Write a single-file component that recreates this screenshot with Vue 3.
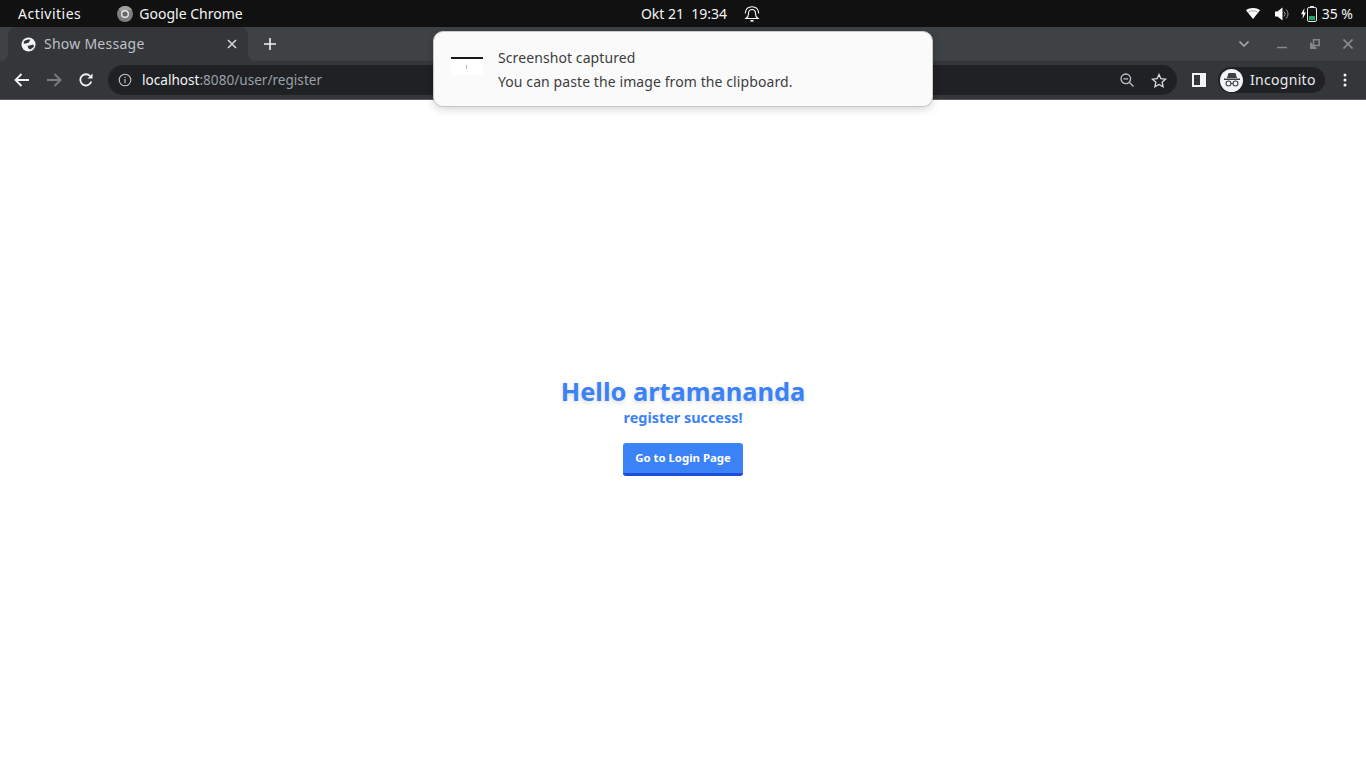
<script setup>
const pageTitle = 'Show Message';
const username = 'artamananda';
</script>

<template>
  <div class="screen">
    <div class="topbar">
      <div class="top-left">
        <span class="activities">Activities</span>
        <span class="app">
          <svg class="app-icon" width="16" height="16" viewBox="0 0 16 16">
            <circle cx="8" cy="8" r="8" fill="#7d7d7d" />
            <path d="M8 0a8 8 0 0 1 7 4H8a4 4 0 0 0-3.600 2.300L2 2.700A8 8 0 0 1 8 0z" fill="#a0a0a0" />
            <circle cx="8" cy="8" r="4" fill="#e8e8e8" />
            <circle cx="8" cy="8" r="2.600" fill="#666" />
          </svg>
          Google Chrome
        </span>
      </div>
      <div class="top-center">
        <span class="clock">Okt 21&nbsp;&nbsp;19:34</span>
        <svg width="16" height="16" viewBox="0 0 16 16" fill="none" stroke="#fff" stroke-width="1.100">
          <path d="M2 12.500c1.500-1 2.500-2.500 2.500-5 0-2.500 1.300-4 3.500-4s3.500 1.500 3.500 4c0 2.500 1 4 2.500 5z" />
          <path d="M1.200 7.500C1.500 3.500 4 .7 8 .7s6.500 2.800 6.800 6.800" />
          <path d="M6.500 14.800h3" stroke-width="1.600" />
        </svg>
      </div>
      <div class="top-right">
        <svg width="14" height="11" viewBox="0 0 14 11">
          <path d="M0 2.200C1.800.8 4.300 0 7 0s5.200.8 7 2.200L7 11z" fill="#fff" />
          <path d="M2.300 4.200C3.600 3.300 5.200 2.800 7 2.800s3.400.5 4.700 1.400" fill="none" stroke="#777" stroke-width=".7" />
        </svg>
        <svg class="vol" width="14" height="14" viewBox="0 0 14 14" fill="none" stroke="#999">
          <path d="M0 4.500h2.500L7.500.5v13l-5-4H0z" fill="#fff" stroke="none" />
          <path d="M9 4.500a3.500 3.500 0 0 1 0 5M11 2.500a6 6 0 0 1 0 9" stroke-width="1" />
        </svg>
        <span class="battery">
          <svg width="5" height="11" viewBox="0 0 5 11"><path d="M3.500 0 0 6.200h2L1.500 11 5 4.500H3z" fill="#fff" /></svg>
          <svg width="10" height="16" viewBox="0 0 10 16">
            <rect x=".5" y="1.500" width="9" height="14" rx="1.500" fill="none" stroke="#e8e8e8" />
            <rect x="3" y="0" width="4" height="1.500" fill="#e8e8e8" />
            <rect x="2" y="10" width="6" height="4" fill="#26a269" />
          </svg>
        </span>
        <span class="percent">35 %</span>
      </div>
    </div>

    <div class="tabstrip">
      <div class="tab">
        <svg width="15" height="15" viewBox="0 0 16 16">
          <circle cx="8" cy="8" r="7.500" fill="#f1f3f4" />
          <path d="M3 4.800C5 3 8 2 10 3L8 6C6.300 6 5 7.500 3 7zM7 9.500 13 8l1 2-4 3.200-2-1z" fill="#35363a" />
        </svg>
        <span class="tab-title">{{ pageTitle }}</span>
        <svg width="10" height="10" viewBox="0 0 10 10" stroke="#dadce0" stroke-width="1.500"><path d="M1 1l8 8M9 1l-8 8" /></svg>
      </div>
      <svg class="new-tab" width="12" height="12" viewBox="0 0 12 12" stroke="#f1f3f4" stroke-width="1.600"><path d="M6 0v12M0 6h12" /></svg>
      <div class="win-controls">
        <svg class="tab-search" width="10" height="6" viewBox="0 0 10 6" fill="none" stroke="#a4a7aa" stroke-width="1.600"><path d="M.5.500 5 5 9.500.500" /></svg>
        <svg width="10" height="10" viewBox="0 0 10 10"><path d="M0 8.500h10" stroke="#85888b" stroke-width="1.500" /></svg>
        <svg width="10" height="10" viewBox="0 0 10 10" fill="none" stroke="#85888b" stroke-width="1.500"><path d="M3.500.8h5.700v5.700H3.500z" /><path d="M.8 3.500v5.700h5.700" fill="#85888b" /></svg>
        <svg width="10" height="10" viewBox="0 0 10 10" stroke="#85888b" stroke-width="1.800"><path d="M.5.500l9 9M9.500.500l-9 9" /></svg>
      </div>
    </div>

    <div class="toolbar">
      <svg class="nav" width="16" height="14" viewBox="0 0 16 14" fill="none" stroke="#f1f3f4" stroke-width="1.800"><path d="M15 7H2M7.500 1 1.500 7l6 6" /></svg>
      <svg class="nav" width="16" height="14" viewBox="0 0 16 14" fill="none" stroke="#7b7d80" stroke-width="1.800"><path d="M1 7h13M8.500 1l6 6-6 6" /></svg>
      <svg class="nav" width="14" height="14" viewBox="0 0 14 14" fill="none" stroke="#f1f3f4" stroke-width="1.800"><path d="M12.300 8.500A5.600 5.600 0 1 1 11 3" /><path d="M13.500 .5v5h-5z" fill="#f1f3f4" stroke="none" /></svg>
      <div class="omnibox">
        <svg width="14" height="14" viewBox="0 0 14 14" fill="none" stroke="#c4c7c9" stroke-width="1.100"><circle cx="7" cy="7" r="5.800" /><path d="M7 6v4.200M7 3.700v1.200" /></svg>
        <span class="url"><span class="host">localhost</span>:8080/user/register</span>
        <svg class="zoom-out" width="14" height="14" viewBox="0 0 14 14" fill="none" stroke="#bdc1c6" stroke-width="1.300"><circle cx="5.800" cy="5.800" r="4.800" /><path d="M9.300 9.300 13.500 13.500M3.500 5.800h4.600" /></svg>
        <svg width="16" height="15" viewBox="0 0 16 15" fill="none" stroke="#dadce0" stroke-width="1.300"><path d="m8 1.500 1.900 4.200 4.600.5-3.400 3 1 4.500L8 11.400l-4.100 2.300 1-4.500-3.400-3 4.600-.5z" /></svg>
      </div>
      <div class="side-panel"></div>
      <div class="profile">
        <span class="avatar">
          <svg width="16" height="14" viewBox="0 0 16 14">
            <path d="M4.500 0h7L13 5H3zM0 5.500h16V7H0z" fill="#3c4043" />
            <g fill="none" stroke="#3c4043" stroke-width="1.100"><circle cx="4.500" cy="10.500" r="2.500" /><circle cx="11.500" cy="10.500" r="2.500" /><path d="M7 10.500h2" /></g>
          </svg>
        </span>
        <span class="profile-label">Incognito</span>
      </div>
      <svg class="menu" width="4" height="14" viewBox="0 0 4 14" fill="#f1f3f4"><circle cx="2" cy="2" r="1.500" /><circle cx="2" cy="7" r="1.500" /><circle cx="2" cy="12" r="1.500" /></svg>
    </div>

    <main class="page">
      <h1 class="hello">Hello {{ username }}</h1>
      <p class="status">register success!</p>
      <button class="login-btn">Go to Login Page</button>
    </main>

    <div class="notification">
      <div class="thumb">
        <span class="thumb-bar"></span>
        <span class="thumb-dot"></span>
      </div>
      <div class="notif-text">
        <div>Screenshot captured</div>
        <div>You can paste the image from the clipboard.</div>
      </div>
    </div>
  </div>
</template>

<style>
html, body {
  margin: 0;
  background: #fff;
}
</style>

<style scoped>
.screen {
  position: relative;
  display: flex;
  flex-direction: column;
  width: 1366px;
  height: 768px;
  overflow: hidden;
  font-family: "Noto Sans", "Open Sans", sans-serif;
}

.topbar {
  display: grid;
  grid-template-columns: 1fr auto 1fr;
  align-items: center;
  height: 27px;
  background: #111;
  color: #f4f4f4;
  font-size: 14px;
}
.top-left {
  display: flex;
  align-items: center;
  gap: 36px;
  padding-left: 18px;
}
.activities {
  letter-spacing: 0.5px;
}
.app {
  display: flex;
  align-items: center;
  gap: 6px;
}
.top-center {
  display: flex;
  align-items: center;
  gap: 17px;
  padding-left: 35px;
}
.top-right {
  display: flex;
  align-items: center;
  justify-content: flex-end;
  padding-right: 13px;
}
.vol {
  margin-left: 15px;
}
.battery {
  display: flex;
  align-items: center;
  gap: 1px;
  margin-left: 12px;
}
.percent {
  margin-left: 5px;
}

.tabstrip {
  display: flex;
  align-items: flex-end;
  height: 34px;
  background: #3e4245;
}
.tab {
  position: relative;
  display: flex;
  align-items: center;
  gap: 8px;
  box-sizing: border-box;
  width: 240px;
  height: 34px;
  margin-left: 8px;
  padding: 0 11px 0 13px;
  background: #35363a;
  border-radius: 8px 8px 0 0;
  color: #bdc1c6;
  font-size: 14px;
}
.tab::before,
.tab::after {
  content: "";
  position: absolute;
  bottom: 0;
  width: 8px;
  height: 8px;
}
.tab::before {
  left: -8px;
  background: radial-gradient(circle at 0 0, transparent 8px, #35363a 8.500px);
}
.tab::after {
  right: -8px;
  background: radial-gradient(circle at 100% 0, transparent 8px, #35363a 8.500px);
}
.tab-title {
  flex: 1;
  margin-bottom: 2px;
  letter-spacing: 0.25px;
}
.new-tab {
  margin: 0 0 11px 16px;
}
.win-controls {
  display: flex;
  align-items: center;
  gap: 23px;
  margin: 0 13px 12px auto;
}
.tab-search {
  margin-right: 5px;
}

.toolbar {
  display: flex;
  align-items: center;
  box-sizing: border-box;
  height: 39px;
  padding: 0 0 0 14px;
  background: #35363a;
  border-bottom: 1px solid #5b5d60;
}
.nav {
  margin-right: 16px;
}
.nav:nth-child(2) {
  margin-right: 17px;
}
.nav:nth-child(3) {
  margin-right: 15px;
}
.omnibox {
  display: flex;
  align-items: center;
  box-sizing: border-box;
  width: 1069px;
  height: 30px;
  padding: 0 10px 0 10px;
  background: #202124;
  border-radius: 15px;
}
.url {
  flex: 1;
  margin-left: 10px;
  margin-bottom: 2px;
  color: #9aa0a6;
  font-size: 13.600px;
}
.host {
  color: #f1f3f4;
}
.zoom-out {
  margin-right: 17px;
}
.side-panel {
  box-sizing: border-box;
  width: 14px;
  height: 14px;
  margin-left: 15px;
  background: #35363a;
  border: 2px solid #f1f3f4;
  border-right-width: 6px;
}
.profile {
  display: flex;
  align-items: center;
  gap: 7px;
  box-sizing: border-box;
  width: 107px;
  height: 26px;
  margin-left: 12px;
  padding-left: 2px;
  background: #202124;
  border-radius: 13px;
}
.avatar {
  display: flex;
  align-items: center;
  justify-content: center;
  width: 23px;
  height: 23px;
  background: #f1f3f4;
  border-radius: 50%;
}
.profile-label {
  margin-bottom: 2px;
  color: #e8eaed;
  font-size: 14px;
  letter-spacing: 0.3px;
}
.menu {
  margin-left: 18px;
}

.page {
  flex: 1;
  display: flex;
  flex-direction: column;
  align-items: center;
  padding-top: 275px;
  background: #fff;
  color: #3b82f6;
}
.hello {
  margin: 0;
  font-size: 25.400px;
  line-height: 32px;
  font-weight: 700;
  text-shadow: 0 2px 4px rgba(0, 0, 0, 0.15);
}
.status {
  margin: 1px 0 0;
  font-size: 14.400px;
  line-height: 20px;
  font-weight: 700;
}
.login-btn {
  box-sizing: border-box;
  width: 120px;
  height: 33px;
  margin-top: 15px;
  padding: 0 0 2px;
  background: #3b82f6;
  border: none;
  border-bottom: 3px solid #1d4ed8;
  border-radius: 3px;
  color: #fff;
  font-family: inherit;
  font-size: 11.400px;
  font-weight: 700;
}

.notification {
  position: absolute;
  top: 31px;
  left: 433px;
  display: flex;
  align-items: center;
  box-sizing: border-box;
  width: 500px;
  height: 76px;
  padding: 0 17px;
  background: #fafafa;
  border: 1px solid #c8c8c8;
  border-radius: 10px;
  box-shadow: 0 2px 8px rgba(0, 0, 0, 0.18);
  color: #3d3d3d;
  font-size: 14px;
  letter-spacing: 0.09px;
}
.thumb {
  position: relative;
  width: 32px;
  height: 18px;
  margin-bottom: 6px;
  background: #fff;
}
.thumb-bar {
  display: block;
  height: 2px;
  background: #1a1a1a;
}
.thumb-dot {
  position: absolute;
  top: 8px;
  left: 15px;
  width: 1px;
  height: 4px;
  background: #9db8ee;
}
.notif-text {
  display: flex;
  flex-direction: column;
  gap: 5px;
  margin-left: 15px;
  line-height: 19px;
}
</style>
